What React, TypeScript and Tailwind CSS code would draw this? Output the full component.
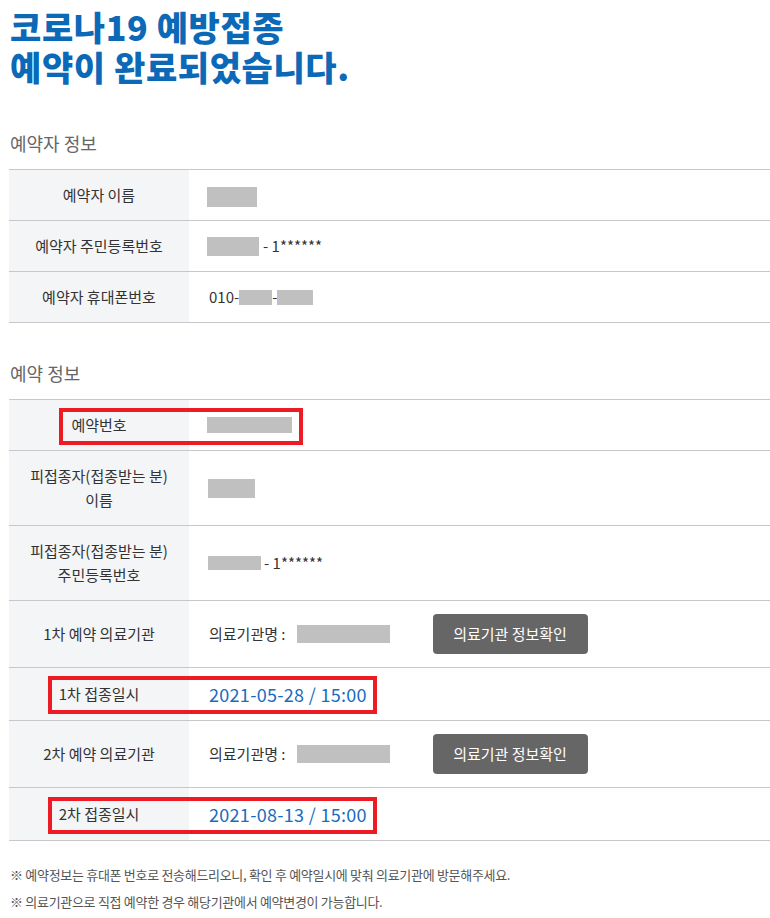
import React from "react";

const Block = ({ cls }: { cls: string }) => <span className={`inline-block bg-[#c0c0c0] ${cls}`} />;

type RowProps = {
  h: string;
  label: React.ReactNode;
  children?: React.ReactNode;
  box?: string;
};

const Row = ({ h, label, children, box }: RowProps) => (
  <div className={`relative flex border-b border-[#c8c8cc] ${h}`}>
    <div className="flex w-[180px] shrink-0 items-center justify-center bg-[#f4f5f7] text-center text-[15px] leading-[24px] text-[#333]">
      {label}
    </div>
    <div className="flex flex-1 items-center pl-[18px] text-[15px] text-[#333]">{children}</div>
    {box ? <div className={`pointer-events-none absolute border-4 border-[#ed1c24] ${box}`} /> : null}
  </div>
);

const Hospital = () => (
  <>
    <span className="ml-[2px]">의료기관명 :</span>
    <Block cls="ml-[11px] w-[93px] h-[18px]" />
    <button className="ml-[43px] h-[40px] w-[155px] rounded-[4px] bg-[#666666] text-[15px] text-white">
      의료기관 정보확인
    </button>
  </>
);

export default function App() {
  return (
    <div className="w-[770px] min-h-[918px] bg-white font-['Noto_Sans_CJK_KR','Noto_Sans',sans-serif]">
      <div className="pl-[10px] pt-[7px] text-[34px] font-black leading-[40px] tracking-[0.6px] text-[#0b69b7]">
        <div>코로나19 예방접종</div>
        <div>예약이 완료되었습니다.</div>
      </div>

      <div className="mt-[43px] pl-[10px] text-[18px] leading-[26px] text-[#666]">예약자 정보</div>
      <div className="ml-[9px] mt-[13px] border-t border-[#c8c8cc]">
        <Row h="h-[51px]" label="예약자 이름">
          <Block cls="w-[50px] h-[20px] mt-[4px]" />
        </Row>
        <Row h="h-[51px]" label="예약자 주민등록번호">
          <Block cls="w-[52px] h-[19px]" />
          <span className="ml-[4px]">- 1******</span>
        </Row>
        <Row h="h-[51px]" label="예약자 휴대폰번호">
          <span className="ml-[2px]">010-</span>
          <Block cls="w-[33px] h-[15px]" />
          <span>-</span>
          <Block cls="w-[36px] h-[15px]" />
        </Row>
      </div>

      <div className="mt-[37px] pl-[10px] text-[18px] leading-[26px] text-[#666]">예약 정보</div>
      <div className="ml-[9px] mt-[13px] border-t border-[#c8c8cc]">
        <Row h="h-[51px]" label="예약번호" box="left-[50px] top-[8px] w-[244px] h-[37px]">
          <Block cls="w-[85px] h-[16px]" />
        </Row>
        <Row
          h="h-[75px]"
          label={
            <span>
              피접종자(접종받는 분)
              <br />
              이름
            </span>
          }
        >
          <Block cls="ml-[1px] w-[47px] h-[19px]" />
        </Row>
        <Row
          h="h-[75px]"
          label={
            <span>
              피접종자(접종받는 분)
              <br />
              주민등록번호
            </span>
          }
        >
          <Block cls="ml-[1px] w-[53px] h-[14px]" />
          <span className="ml-[3px]">- 1******</span>
        </Row>
        <Row h="h-[67px]" label="1차 예약 의료기관">
          <Hospital />
        </Row>
        <Row h="h-[53px]" label="1차 접종일시" box="left-[39px] top-[8px] w-[329px] h-[38px]">
          <span className="ml-[2px] text-[18px] tracking-[0.3px] text-[#196cc0]">2021-05-28 / 15:00</span>
        </Row>
        <Row h="h-[67px]" label="2차 예약 의료기관">
          <Hospital />
        </Row>
        <Row h="h-[53px]" label="2차 접종일시" box="left-[39px] top-[9px] w-[329px] h-[37px]">
          <span className="ml-[2px] text-[18px] tracking-[0.3px] text-[#196cc0]">2021-08-13 / 15:00</span>
        </Row>
      </div>

      <div className="mt-[20px] pl-[10px] text-[13px] leading-[27px] tracking-[-0.3px] text-[#555]">
        <p>※ 예약정보는 휴대폰 번호로 전송해드리오니, 확인 후 예약일시에 맞춰 의료기관에 방문해주세요.</p>
        <p>※ 의료기관으로 직접 예약한 경우 해당기관에서 예약변경이 가능합니다.</p>
      </div>
    </div>
  );
}
